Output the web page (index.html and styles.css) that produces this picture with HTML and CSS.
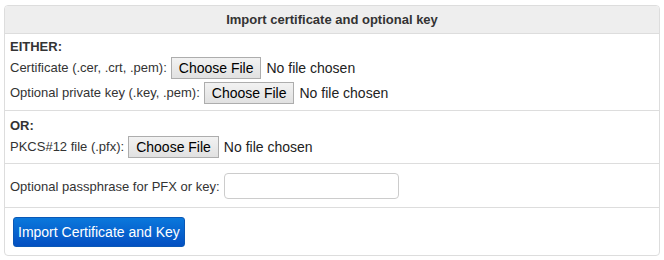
FILE: index.html
```html
<!DOCTYPE html>
<html lang="en">
<head>
    <meta charset="UTF-8">
    <title>Import certificate</title>
    <link rel="stylesheet" href="styles.css">
</head>
<body>
    <form class="panel">
        <div class="panel-head">Import certificate and optional key</div>

        <div class="row row-either">
            <div class="heading">EITHER:</div>
            <div class="line">
                <label for="certFile">Certificate (.cer, .crt, .pem):</label>
                <input type="file" id="certFile" class="file">
            </div>
            <div class="line">
                <label for="keyFile">Optional private key (.key, .pem):</label>
                <input type="file" id="keyFile" class="file">
            </div>
        </div>

        <div class="row row-or">
            <div class="heading">OR:</div>
            <div class="line">
                <label for="pfxFile">PKCS#12 file (.pfx):</label>
                <input type="file" id="pfxFile" class="file">
            </div>
        </div>

        <div class="row row-pass">
            <label for="passphrase">Optional passphrase for PFX or key:</label>
            <input type="password" id="passphrase" class="pass">
        </div>

        <div class="row row-submit">
            <button type="button" class="submit">Import Certificate and Key</button>
        </div>
    </form>
</body>
</html>
```

FILE: styles.css
```css
body {
    margin: 0;
    padding: 5px 4px;
    font-family: "Liberation Sans", Arial, sans-serif;
    font-size: 13px;
    color: #333;
    background: #fff;
}
.panel {
    width: 654px;
    border: 1px solid #ddd;
    border-radius: 4px;
    overflow: hidden;
}
.panel-head {
    background: #eee;
    border-bottom: 1px solid #ddd;
    text-align: center;
    font-weight: bold;
    height: 27px;
    line-height: 27px;
}
.row {
    border-bottom: 1px solid #ddd;
}
.row:last-child {
    border-bottom: none;
}
.row-either {
    padding: 5px 5px 5px;
}
.row-or {
    padding: 7px 5px 4px;
}
.heading {
    font-weight: bold;
    font-size: 13px;
    line-height: 16px;
}
.line {
    display: flex;
    align-items: center;
    height: 25px;
}
.line label {
    margin-right: 4px;
}
.file {
    font-family: "Liberation Sans", Arial, sans-serif;
    font-size: 14px;
    color: #222;
}
.file::file-selector-button {
    font-family: "Liberation Sans", Arial, sans-serif;
    font-size: 14px;
    height: 22px;
    padding: 0 7px;
    margin-right: 5px;
    border: 1px solid #adadad;
    border-radius: 0;
    background: linear-gradient(#f2f2f2, #e1e1e1);
    color: #000;
}
.row-pass {
    display: flex;
    align-items: center;
    height: 34px;
    padding: 5px 5px 4px;
}
.row-pass label {
    margin-right: 4px;
}
.pass {
    width: 175px;
    height: 26px;
    box-sizing: border-box;
    border: 1px solid #ccc;
    border-radius: 4px;
}
.row-submit {
    padding: 9px 8px 8px;
}
.submit {
    font-family: "Liberation Sans", Arial, sans-serif;
    font-size: 14px;
    color: #fff;
    height: 30px;
    padding: 0 4px;
    border: 1px solid #0a58b6;
    border-radius: 3px;
    background: linear-gradient(#0a78dc, #0450c2);
    cursor: pointer;
}
```
